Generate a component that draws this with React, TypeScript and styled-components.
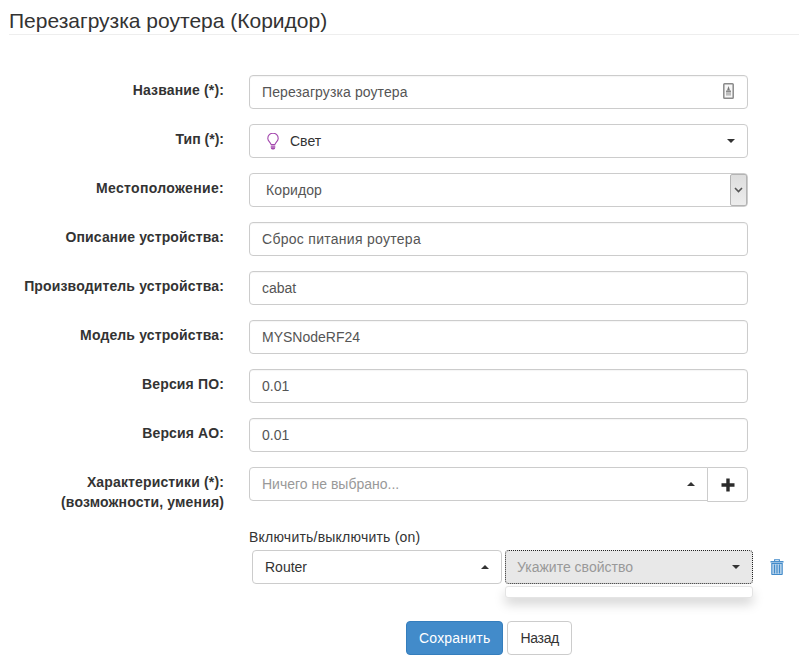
import React from "react";
import styled, { createGlobalStyle } from "styled-components";

const Global = createGlobalStyle`
  html, body { margin: 0; padding: 0; background: #fff; }
  body { font-family: "Liberation Sans", Arial, sans-serif; font-size: 14px; color: #333; line-height: 20px; }
  * { box-sizing: border-box; }
`;

const Page = styled.div`
  width: 799px;
  height: 666px;
  overflow: hidden;
  padding-left: 9px;
`;
const Title = styled.h1`
  margin: 0;
  height: 35px;
  padding-top: 9px;
  font-size: 21px;
  line-height: 24px;
  font-weight: 400;
  color: #333;
  border-bottom: 1px solid #eee;
`;
const Form = styled.div`
  display: flex;
  flex-direction: column;
  gap: 15px;
  padding-top: 40px;
`;
const Row = styled.div`
  display: flex;
  height: 34px;
`;
const Label = styled.label<{ $ls?: number }>`
  flex: 0 0 215px;
  text-align: right;
  font-weight: 700;
  font-size: 14px;
  line-height: 20px;
  padding-top: 5px;
  color: #333;
  letter-spacing: ${(p) => p.$ls ?? 0.14}px;
  white-space: nowrap;
`;
const Field = styled.div`
  margin-left: 25px;
  width: 499px;
  position: relative;
  display: flex;
`;
const Input = styled.input<{ $ls?: number }>`
  width: 100%;
  height: 34px;
  padding: 0 12px;
  border: 1px solid #ccc;
  border-radius: 4px;
  background: #fff;
  color: #555;
  font: 14px "Liberation Sans", Arial, sans-serif;
  letter-spacing: ${(p) => p.$ls ?? 0}px;
  outline: none;
  box-shadow: inset 0 1px 1px rgba(0, 0, 0, 0.04);
`;
const InputIcon = styled.svg`
  position: absolute;
  right: 14px;
  top: 8px;
`;
const SelectBox = styled.div<{ $focus?: boolean; $grow?: boolean; $squareRight?: boolean; $w?: number }>`
  display: flex;
  align-items: center;
  height: 34px;
  flex: ${(p) => (p.$grow ? "1 1 auto" : "0 0 auto")};
  width: ${(p) => (p.$w ? `${p.$w}px` : "auto")};
  padding: 0 12px;
  padding-left: ${(p) => (p.$focus ? "11px" : "12px")};
  border: 1px ${(p) => (p.$focus ? "dotted #222" : "solid #ccc")};
  border-radius: ${(p) => (p.$squareRight ? "4px 0 0 4px" : "4px")};
  background: ${(p) => (p.$focus ? "#e8e8e8" : "#fff")};
  color: #333;
  font-size: 14px;
`;
const SelectText = styled.span<{ $muted?: boolean }>`
  flex: 1;
  color: ${(p) => (p.$muted ? "#999" : "#333")};
`;
const Caret = styled.span<{ $up?: boolean }>`
  width: 0;
  height: 0;
  border-left: 4px solid transparent;
  border-right: 4px solid transparent;
  ${(p) => (p.$up ? "border-bottom: 4px solid #333;" : "border-top: 4px solid #333;")}
`;
const Bulb = styled.svg`
  margin-right: 11px;
  margin-left: 5px;
`;
const NativeSelect = styled.div`
  flex: 1;
  display: flex;
  height: 34px;
  border: 1px solid #ccc;
  border-radius: 4px;
  color: #555;
  font-size: 14px;
  align-items: center;
  padding-left: 16px;
`;
const NativeText = styled.span`
  flex: 1;
  letter-spacing: 0.1px;
`;
const NativeArrow = styled.span`
  width: 17px;
  height: 32px;
  display: flex;
  align-items: center;
  justify-content: center;
  background: linear-gradient(#dedede, #ededed);
  border: 1px solid #b4b4b4;
  border-radius: 2px;
`;
const AddButton = styled.button`
  width: 41px;
  height: 35px;
  margin-left: -1px;
  border: 1px solid #ccc;
  border-radius: 0 4px 4px 0;
  background: #fff;
  display: flex;
  align-items: center;
  justify-content: center;
  padding: 0;
`;
const TwoLine = styled.span`
  display: block;
`;
const SubSection = styled.div`
  margin-left: 240px;
  padding-top: 27px;
`;
const SubLabel = styled.div`
  font-size: 14px;
  line-height: 20px;
  color: #333;
  height: 20px;
  margin-top: -1px;
  letter-spacing: 0.22px;
`;
const SubRow = styled.div`
  display: flex;
  gap: 3px;
  margin-top: 3px;
  margin-left: 3px;
  align-items: center;
`;
const SelectWrap = styled.div`
  position: relative;
`;
const Menu = styled.div`
  position: absolute;
  top: 36px;
  left: 0;
  width: 248px;
  height: 12px;
  background: #fff;
  border: 1px solid #e4e4e4;
  border-radius: 3px;
  box-shadow: 0 6px 12px rgba(0, 0, 0, 0.175);
`;
const Trash = styled.svg`
  margin-left: 14px;
`;
const Actions = styled.div`
  display: flex;
  gap: 4px;
  margin-left: 397px;
  margin-top: 37px;
`;
const Btn = styled.button<{ $primary?: boolean }>`
  height: 34px;
  padding: 0 12px;
  border-radius: 4px;
  font: 14px "Liberation Sans", Arial, sans-serif;
  letter-spacing: ${(p) => (p.$primary ? "0.2px" : "-0.3px")};
  border: 1px solid ${(p) => (p.$primary ? "#357ebd" : "#ccc")};
  background: ${(p) => (p.$primary ? "#428bca" : "#fff")};
  color: ${(p) => (p.$primary ? "#fff" : "#333")};
`;

const rows: { label: string; value: string; ls?: number }[] = [
  { label: "Описание устройства:", value: "Сброс питания роутера", ls: 0.28 },
  { label: "Производитель устройства:", value: "cabat" },
  { label: "Модель устройства:", value: "MYSNodeRF24" },
  { label: "Версия ПО:", value: "0.01" },
  { label: "Версия АО:", value: "0.01" },
];

export default function App() {
  return (
    <Page>
      <Global />
      <Title>Перезагрузка роутера (Коридор)</Title>
      <Form>
        <Row>
          <Label>Название (*):</Label>
          <Field>
            <Input readOnly value="Перезагрузка роутера" $ls={0.1} />
            <InputIcon width="11" height="16" viewBox="0 0 11 16" fill="none">
              <rect x="0.8" y="0.8" width="9.4" height="14.4" rx="0.8" fill="#f6f6f6" stroke="#8a8a8a" strokeWidth="1.5" />
              <path d="M5.5 3L4 7.5h3Z" fill="#777" />
              <rect x="3" y="7.5" width="5" height="2" fill="#8a8a8a" />
              <rect x="3" y="10" width="5" height="2.6" fill="#bdbdbd" />
            </InputIcon>
          </Field>
        </Row>
        <Row>
          <Label $ls={0}>Тип (*):</Label>
          <Field>
            <SelectBox $grow>
              <Bulb width="12" height="17" viewBox="0 0 12 17" fill="none">
                <path d="M4 11.5C3.8 9.5 0.8 8.4 0.8 5.4A5.2 5.2 0 0 1 11.2 5.4C11.2 8.4 8.2 9.5 8 11.5Z" stroke="#a347ad" strokeWidth="1.1" strokeLinejoin="round" />
                <path d="M3.8 12.4h4.4v2.4a1.6 1.6 0 0 1-1.6 1.6H5.4a1.6 1.6 0 0 1-1.6-1.6Z" fill="#a347ad" />
                <path d="M3.8 14h4.4" stroke="#e3c3e6" strokeWidth="0.7" />
              </Bulb>
              <SelectText>Свет</SelectText>
              <Caret />
            </SelectBox>
          </Field>
        </Row>
        <Row>
          <Label $ls={0.33}>Местоположение:</Label>
          <Field>
            <NativeSelect>
              <NativeText>Коридор</NativeText>
              <NativeArrow>
                <svg width="9" height="6" viewBox="0 0 9 6" fill="none">
                  <path d="M1 1L4.5 4.5L8 1" stroke="#555" strokeWidth="1.6" />
                </svg>
              </NativeArrow>
            </NativeSelect>
          </Field>
        </Row>
        {rows.map((r) => (
          <Row key={r.label}>
            <Label>{r.label}</Label>
            <Field>
              <Input readOnly value={r.value} $ls={r.ls} />
            </Field>
          </Row>
        ))}
        <Row>
          <Label>
            <TwoLine>Характеристики (*):</TwoLine>
            <TwoLine>(возможности, умения)</TwoLine>
          </Label>
          <Field>
            <SelectBox $grow $squareRight>
              <SelectText $muted>Ничего не выбрано...</SelectText>
              <Caret $up />
            </SelectBox>
            <AddButton>
              <svg width="14" height="14" viewBox="0 0 14 14">
                <path d="M5.3 0.5h3.4v4.8h4.8v3.4H8.7v4.8H5.3V8.7H0.5V5.3h4.8Z" fill="#2b2b2b" />
              </svg>
            </AddButton>
          </Field>
        </Row>
      </Form>
      <SubSection>
        <SubLabel>Включить/выключить (on)</SubLabel>
        <SubRow>
          <SelectBox $w={250}>
            <SelectText>Router</SelectText>
            <Caret $up />
          </SelectBox>
          <SelectWrap>
            <SelectBox $focus $w={248}>
              <SelectText $muted>Укажите свойство</SelectText>
              <Caret />
            </SelectBox>
            <Menu />
          </SelectWrap>
          <Trash width="14" height="16" viewBox="0 0 14 16" fill="none">
            <path d="M4.6 2V0.7h4.8V2" stroke="#428bca" strokeWidth="1.1" />
            <path d="M0.5 2.8h13" stroke="#428bca" strokeWidth="1.5" />
            <path d="M1.8 4.5h10.4V15a.6.6 0 0 1-.6.6H2.4a.6.6 0 0 1-.6-.6Z" fill="#b9d4ec" stroke="#428bca" strokeWidth="1.1" />
            <path d="M4.5 5.5v9M7 5.5v9M9.5 5.5v9" stroke="#428bca" strokeWidth="1.2" />
          </Trash>
        </SubRow>
      </SubSection>
      <Actions>
        <Btn $primary>Сохранить</Btn>
        <Btn>Назад</Btn>
      </Actions>
    </Page>
  );
}
